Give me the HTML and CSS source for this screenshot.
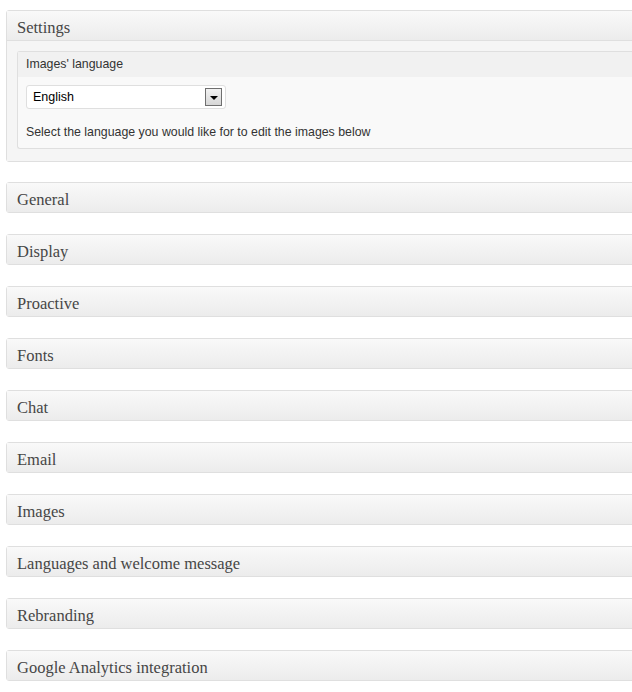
FILE: index.html
```html
<!DOCTYPE html>
<html>
<head>
<meta charset="utf-8">
<link rel="stylesheet" href="styles.css">
</head>
<body>
<div class="wrap">
  <div class="box open">
    <h3 class="hndle">Settings</h3>
    <div class="inside">
      <div class="subbox">
        <div class="subhead">Images' language</div>
        <div class="subbody">
          <div class="select">
            <span class="select-value">English</span>
            <span class="select-btn"><span class="tri"></span></span>
          </div>
          <p class="desc">Select the language you would like for to edit the images below</p>
        </div>
      </div>
    </div>
  </div>
  <div class="box"><h3 class="hndle">General</h3></div>
  <div class="box"><h3 class="hndle">Display</h3></div>
  <div class="box"><h3 class="hndle">Proactive</h3></div>
  <div class="box"><h3 class="hndle">Fonts</h3></div>
  <div class="box"><h3 class="hndle">Chat</h3></div>
  <div class="box"><h3 class="hndle">Email</h3></div>
  <div class="box"><h3 class="hndle">Images</h3></div>
  <div class="box"><h3 class="hndle">Languages and welcome message</h3></div>
  <div class="box"><h3 class="hndle">Rebranding</h3></div>
  <div class="box"><h3 class="hndle">Google Analytics integration</h3></div>
</div>
</body>
</html>
```
FILE: styles.css
```css
html, body {
  margin: 0;
  padding: 0;
  background: #ffffff;
  overflow: hidden;
}
.wrap {
  width: 700px;
  padding: 10px 0 0 6px;
  display: flex;
  flex-direction: column;
  gap: 21px;
}
.box {
  border: 1px solid #dfdfdf;
  border-radius: 3px 0 0 3px;
  background: #f5f5f5;
}
.hndle {
  margin: 0;
  height: 29px;
  line-height: 33px;
  padding: 0 10px;
  font-family: "Liberation Serif", "Times New Roman", serif;
  font-weight: normal;
  font-size: 16.5px;
  color: #464646;
  background: linear-gradient(to bottom, #f9f9f9, #ececec);
}
.open .hndle {
  border-bottom: 1px solid #dfdfdf;
}
.open {
  margin-bottom: -1px;
}
.inside {
  padding: 10px 0 12px 10px;
  background: #f5f5f5;
}
.subbox {
  border: 1px solid #dfdfdf;
  border-right: none;
  border-radius: 3px 0 0 3px;
  background: #f9f9f9;
  font-family: "Liberation Sans", Arial, sans-serif;
  font-size: 12.35px;
  color: #333333;
}
.subhead {
  height: 25px;
  line-height: 25px;
  padding: 0 8px;
  background: #f1f1f1;
  color: #333333;
}
.subbody {
  padding: 8px 8px 7px 8px;
}
.select {
  box-sizing: border-box;
  width: 200px;
  height: 24px;
  border: 1px solid #dfdfdf;
  border-radius: 3px;
  background: #ffffff;
  display: flex;
  align-items: center;
  justify-content: space-between;
  padding: 0 3px 0 6px;
  font-size: 12.5px;
  color: #000000;
}
.select-btn {
  box-sizing: border-box;
  width: 17px;
  height: 18px;
  border: 1px solid #6f6f6f;
  background: linear-gradient(to bottom, #f2f2f2, #d6d6d6);
  display: flex;
  align-items: center;
  justify-content: center;
}
.tri {
  width: 0;
  height: 0;
  border-left: 4px solid transparent;
  border-right: 4px solid transparent;
  border-top: 4px solid #000000;
  margin-top: 1px;
}
.desc {
  margin: 14px 0 0 0;
  line-height: 18px;
}
```
